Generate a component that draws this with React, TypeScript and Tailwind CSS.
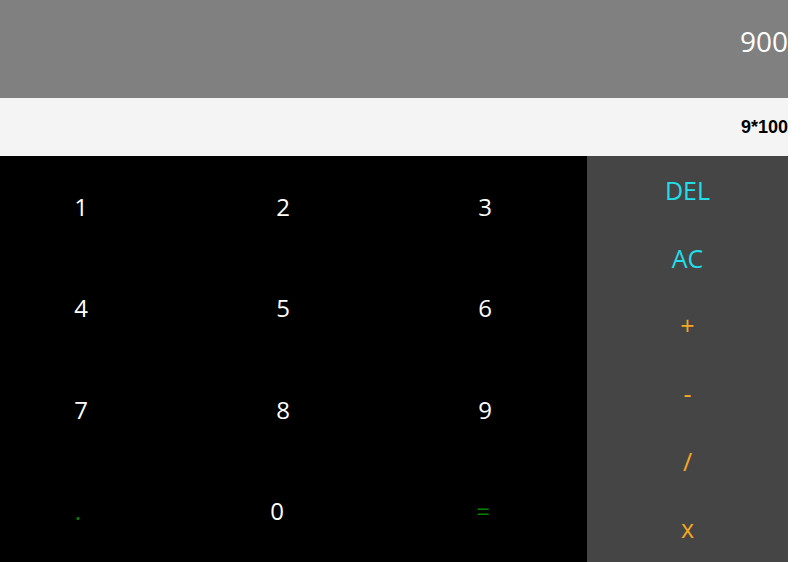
import React from "react";

const digitRows = [
  ["1", "2", "3"],
  ["4", "5", "6"],
  ["7", "8", "9"],
];

export default function App() {
  return (
    <div className="w-[788px] h-[562px] flex flex-col" style={{ fontFamily: '"Open Sans", "Noto Sans", sans-serif' }}>
      <div className="h-[98px] bg-[#808080] flex items-center justify-end pb-[16px] overflow-hidden">
        <span className="text-[28px] text-white leading-none whitespace-nowrap">900</span>
      </div>
      <div className="h-[58px] bg-[#f4f4f4] flex items-center justify-end">
        <span className="text-[18px] font-bold text-black" style={{ fontFamily: '"Liberation Sans", Arial, sans-serif' }}>
          9*100
        </span>
      </div>
      <div className="flex flex-1">
        <div className="w-[587px] bg-black grid grid-rows-4">
          {digitRows.map((row, i) => (
            <div key={i} className="flex items-center gap-[40px]">
              {row.map((d) => (
                <button key={d} className="w-[162px] text-center text-white text-[24px] leading-none">
                  {d}
                </button>
              ))}
            </div>
          ))}
          <div className="flex items-center gap-[40px]">
            <button className="w-[162px] text-center text-[#008000] text-[24px] leading-none pr-[6px]">.</button>
            <button className="w-[162px] text-center text-white text-[24px] leading-none pr-[12px]">0</button>
            <button className="w-[162px] text-center text-[#008000] text-[24px] leading-none pr-[4px]">=</button>
          </div>
        </div>
        <div className="w-[201px] bg-[#454545] grid grid-rows-6">
          <button className="flex items-center justify-center text-[25px] text-[#22dee8] pt-[2px]">DEL</button>
          <button className="flex items-center justify-center text-[25px] text-[#22dee8] pt-[2px]">AC</button>
          <button className="flex items-center justify-center text-[25px] text-[#f5a623] pt-[2px]">+</button>
          <button className="flex items-center justify-center text-[25px] text-[#f5a623] pt-[2px]">-</button>
          <button className="flex items-center justify-center text-[25px] text-[#f5a623] pt-[2px]">/</button>
          <button className="flex items-center justify-center text-[25px] text-[#f5a623] pt-[2px]">x</button>
        </div>
      </div>
    </div>
  );
}
